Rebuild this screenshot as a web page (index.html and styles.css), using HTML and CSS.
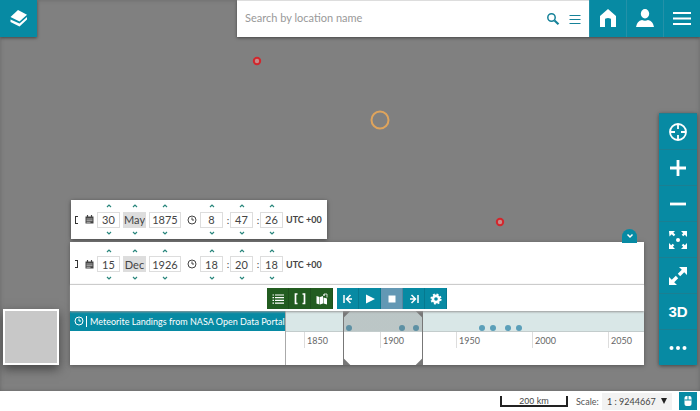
FILE: index.html
```html
<!DOCTYPE html>
<html lang="en">
<head>
<meta charset="utf-8">
<title>Map timeline</title>
<link rel="stylesheet" href="styles.css">
</head>
<body>
<main class="map">
  <svg class="pin pin-a" viewBox="0 0 10 10" aria-hidden="true"><circle cx="5" cy="5" r="3.2" fill="#c98a8a" stroke="#d2262c" stroke-width="2"/></svg>
  <svg class="pin pin-b" viewBox="0 0 10 10" aria-hidden="true"><circle cx="5" cy="5" r="3.2" fill="#c98a8a" stroke="#d2262c" stroke-width="2"/></svg>
  <svg class="pin pin-large" viewBox="0 0 20 20" aria-hidden="true"><circle cx="10" cy="10" r="8.5" fill="none" stroke="#dfa45c" stroke-width="2"/></svg>

  <header class="topbar">
    <button class="tile" aria-label="Layers"><svg width="20" height="20" viewBox="0 0 20 20" fill="#fff"><path d="M9 1l9 4.700-7.500 6.800L1.500 8z"/><path d="M1.500 10.500l9 4L18 8v2.500L10.500 17.500 1.500 13z"/></svg></button>
    <div class="top-right">
      <form class="search">
        <input type="text" placeholder="Search by location name" aria-label="Search by location name">
        <button type="button" aria-label="Search"><svg width="14" height="14" viewBox="0 0 14 14" fill="none" stroke="#168299"><circle cx="5.500" cy="5.500" r="3.700" stroke-width="1.500"/><path d="M8.500 8.500l4 3.700" stroke-width="2.200"/></svg></button>
        <button type="button" aria-label="Search options"><svg width="12" height="12" viewBox="0 0 12 12" stroke="#168299" stroke-width="1.200"><path d="M.5 2.500h11M.5 6.500h11M.5 10.500h11"/></svg></button>
      </form>
      <button class="tile" aria-label="Home"><svg width="20" height="20" viewBox="0 0 20 20" fill="#fff"><path d="M10 0l8 7v11h-5v-7.500q0-1.500-3-1.500t-3 1.500V18H2V7z"/></svg></button>
      <button class="tile" aria-label="Account"><svg width="20" height="20" viewBox="0 0 20 20" fill="#fff"><ellipse cx="10" cy="4.700" rx="4.200" ry="4.700"/><path d="M1 18q1-6 6-7 3 1.500 6 0 5 1 6 7z"/></svg></button>
      <button class="tile" aria-label="Menu"><svg width="20" height="20" viewBox="0 0 20 20" stroke="#fff" stroke-width="1.800"><path d="M1 4h18M1 9.500h18M1 15h18"/></svg></button>
    </div>
  </header>

  <div class="workspace">
    <button class="minimap" aria-label="Background selector"></button>

    <section class="timeline">
      <form class="range range-start">
        <span class="bracket open"></span>
        <svg class="cal" viewBox="0 0 9 9"><path d="M.5 1.500h8v7h-8z" fill="#444"/><path d="M1.500 4h6M1.500 5.700h6M1.500 7.300h4" stroke="#ddd" stroke-width=".7"/><path d="M2.500 0v2.500M6.500 0v2.500" stroke="#444" stroke-width="1.200"/></svg>
        <div class="field"><button type="button" aria-label="Next day"><svg viewBox="0 0 6 4"><path d="M1 3l2-2 2 2"/></svg></button><input value="30" aria-label="Start day"><button type="button" aria-label="Previous day"><svg viewBox="0 0 6 4"><path d="M1 1l2 2 2-2"/></svg></button></div>
        <div class="field month"><button type="button" aria-label="Next month"><svg viewBox="0 0 6 4"><path d="M1 3l2-2 2 2"/></svg></button><input value="May" aria-label="Start month"><button type="button" aria-label="Previous month"><svg viewBox="0 0 6 4"><path d="M1 1l2 2 2-2"/></svg></button></div>
        <div class="field year"><button type="button" aria-label="Next year"><svg viewBox="0 0 6 4"><path d="M1 3l2-2 2 2"/></svg></button><input value="1875" aria-label="Start year"><button type="button" aria-label="Previous year"><svg viewBox="0 0 6 4"><path d="M1 1l2 2 2-2"/></svg></button></div>
        <svg class="clock" viewBox="0 0 10 10"><circle cx="5" cy="5" r="4"/><path d="M5 2.500V5h2"/></svg>
        <div class="field"><button type="button" aria-label="Next hour"><svg viewBox="0 0 6 4"><path d="M1 3l2-2 2 2"/></svg></button><input value="8" aria-label="Start hour"><button type="button" aria-label="Previous hour"><svg viewBox="0 0 6 4"><path d="M1 1l2 2 2-2"/></svg></button></div>
        <span class="colon">:</span>
        <div class="field"><button type="button" aria-label="Next minute"><svg viewBox="0 0 6 4"><path d="M1 3l2-2 2 2"/></svg></button><input value="47" aria-label="Start minute"><button type="button" aria-label="Previous minute"><svg viewBox="0 0 6 4"><path d="M1 1l2 2 2-2"/></svg></button></div>
        <span class="colon">:</span>
        <div class="field"><button type="button" aria-label="Next second"><svg viewBox="0 0 6 4"><path d="M1 3l2-2 2 2"/></svg></button><input value="26" aria-label="Start second"><button type="button" aria-label="Previous second"><svg viewBox="0 0 6 4"><path d="M1 1l2 2 2-2"/></svg></button></div>
        <span class="utc">UTC +00</span>
      </form>

      <div class="panel">
        <button class="collapse" aria-label="Collapse timeline"><svg width="8" height="6" viewBox="0 0 8 6" fill="none" stroke="#fff" stroke-width="1.500"><path d="M1.500 1.500L4 4l2.500-2.500"/></svg></button>
        <form class="range range-end">
          <span class="bracket close"></span>
          <svg class="cal" viewBox="0 0 9 9"><path d="M.5 1.500h8v7h-8z" fill="#444"/><path d="M1.500 4h6M1.500 5.700h6M1.500 7.300h4" stroke="#ddd" stroke-width=".7"/><path d="M2.500 0v2.500M6.500 0v2.500" stroke="#444" stroke-width="1.200"/></svg>
          <div class="field"><button type="button" aria-label="Next day"><svg viewBox="0 0 6 4"><path d="M1 3l2-2 2 2"/></svg></button><input value="15" aria-label="End day"><button type="button" aria-label="Previous day"><svg viewBox="0 0 6 4"><path d="M1 1l2 2 2-2"/></svg></button></div>
          <div class="field month"><button type="button" aria-label="Next month"><svg viewBox="0 0 6 4"><path d="M1 3l2-2 2 2"/></svg></button><input value="Dec" aria-label="End month"><button type="button" aria-label="Previous month"><svg viewBox="0 0 6 4"><path d="M1 1l2 2 2-2"/></svg></button></div>
          <div class="field year"><button type="button" aria-label="Next year"><svg viewBox="0 0 6 4"><path d="M1 3l2-2 2 2"/></svg></button><input value="1926" aria-label="End year"><button type="button" aria-label="Previous year"><svg viewBox="0 0 6 4"><path d="M1 1l2 2 2-2"/></svg></button></div>
          <svg class="clock" viewBox="0 0 10 10"><circle cx="5" cy="5" r="4"/><path d="M5 2.500V5h2"/></svg>
          <div class="field"><button type="button" aria-label="Next hour"><svg viewBox="0 0 6 4"><path d="M1 3l2-2 2 2"/></svg></button><input value="18" aria-label="End hour"><button type="button" aria-label="Previous hour"><svg viewBox="0 0 6 4"><path d="M1 1l2 2 2-2"/></svg></button></div>
          <span class="colon">:</span>
          <div class="field"><button type="button" aria-label="Next minute"><svg viewBox="0 0 6 4"><path d="M1 3l2-2 2 2"/></svg></button><input value="20" aria-label="End minute"><button type="button" aria-label="Previous minute"><svg viewBox="0 0 6 4"><path d="M1 1l2 2 2-2"/></svg></button></div>
          <span class="colon">:</span>
          <div class="field"><button type="button" aria-label="Next second"><svg viewBox="0 0 6 4"><path d="M1 3l2-2 2 2"/></svg></button><input value="18" aria-label="End second"><button type="button" aria-label="Previous second"><svg viewBox="0 0 6 4"><path d="M1 1l2 2 2-2"/></svg></button></div>
          <span class="utc">UTC +00</span>
        </form>

        <div class="playback">
          <div class="group green">
            <button aria-label="Show layers"><svg viewBox="0 0 14 14" stroke="#fff" stroke-width="1.200"><path d="M4 3h9M4 5.700h9M4 8.400h9M4 11.100h9M1.500 3H3M1.500 5.700H3M1.500 8.400H3M1.500 11.100H3"/></svg></button>
            <button aria-label="Time range"><svg viewBox="0 0 14 14" fill="none" stroke="#fff" stroke-width="1.700"><path d="M4.500 2h-2v9.500h2M9.500 2h2v9.500h-2"/></svg></button>
            <button aria-label="Sync map with timeline"><svg viewBox="0 0 14 14" fill="#fff"><path d="M1.500 4l3 1v7.500l-3-1zM5 5l3-1v7.500l-3 1zM8.500 5.500l3.500 1v6l-3.500-1z"/><path d="M9 4V2h3v3.500M8 3h2" fill="none" stroke="#fff" stroke-width=".8"/></svg></button>
          </div>
          <div class="group">
            <button aria-label="Step back"><svg viewBox="0 0 14 14" fill="none" stroke="#fff" stroke-width="1.500"><path d="M3 3v8M9.500 3L5.500 7l4 4M6 7h5"/></svg></button>
            <button aria-label="Play"><svg viewBox="0 0 14 14" fill="#fff"><path d="M3 2.500L12 7l-9 4.500z"/></svg></button>
            <button class="muted" aria-label="Stop"><svg viewBox="0 0 14 14" fill="#fff"><path d="M3.500 3.500h7v7h-7z"/></svg></button>
            <button aria-label="Step forward"><svg viewBox="0 0 14 14" fill="none" stroke="#fff" stroke-width="1.500"><path d="M11 3v8M4.500 3l4 4-4 4M3 7h5"/></svg></button>
            <button aria-label="Settings"><svg viewBox="0 0 14 14" fill="none" stroke="#fff"><circle cx="7" cy="7" r="3.100" stroke-width="2.600"/><circle cx="7" cy="7" r="4.700" stroke-width="1.800" stroke-dasharray="1.900 1.790"/></svg></button>
          </div>
        </div>

        <div class="chart">
          <div class="layers">
            <div class="layer"><svg viewBox="0 0 10 10"><circle cx="5" cy="5" r="4"/><path d="M5 2.500V5h2"/></svg><span>Meteorite Landings from NASA Open Data Portal</span></div>
          </div>
          <div class="track">
            <div class="band">
              <i class="dot" style="left:63px"></i><i class="dot" style="left:116px"></i><i class="dot" style="left:130px"></i><i class="dot" style="left:196px"></i><i class="dot" style="left:207px"></i><i class="dot" style="left:222px"></i><i class="dot" style="left:233px"></i>
            </div>
            <div class="axis"><span>1850</span><span>1900</span><span>1950</span><span>2000</span><span>2050</span></div>
            <div class="selection"></div>
          </div>
        </div>
      </div>
    </section>

    <nav class="tools" aria-label="Map tools">
      <button aria-label="Locate"><svg viewBox="0 0 20 20" fill="none" stroke="#fff" stroke-width="1.800"><circle cx="10" cy="10" r="8"/><path d="M10 2v5M10 13v5M2 10h5M13 10h5"/></svg></button>
      <button aria-label="Zoom in"><svg viewBox="0 0 20 20" stroke="#fff" stroke-width="2.800"><path d="M2 10h16M10 2v16"/></svg></button>
      <button aria-label="Zoom out"><svg viewBox="0 0 20 20" stroke="#fff" stroke-width="2.800"><path d="M2 10h16"/></svg></button>
      <button aria-label="Zoom to full extent"><svg viewBox="0 0 20 20" fill="#fff"><path d="M1 1h6L5.300 2.700l2 2-1.600 1.600-2-2L1.500 6.500zM19 1v6l-2.200-2.200-1.500 1.500-1.600-1.600 1.500-1.500L13 1zM1 19v-6l2.200 2.200 1.500-1.500 1.600 1.600-1.500 1.500L7 19zM19 19h-6l2.200-2.200-1.500-1.500 1.600-1.600 1.500 1.500L19 13z"/><circle cx="10" cy="10" r="2"/></svg></button>
      <button aria-label="Full screen"><svg viewBox="0 0 20 20" fill="#fff"><path d="M11 1h8v8l-2.800-2.800-4 4-2.400-2.400 4-4zM9 19H1v-8l2.800 2.800 4-4 2.400 2.400-4 4z"/></svg></button>
      <button>3D</button>
      <button aria-label="More tools"><svg viewBox="0 0 20 20" fill="#fff"><circle cx="3.500" cy="10" r="2"/><circle cx="10" cy="10" r="2"/><circle cx="16.500" cy="10" r="2"/></svg></button>
    </nav>
  </div>
</main>

<footer class="footer">
  <div class="scalebar">200 km</div>
  <label for="scale">Scale:</label>
  <div class="select"><select id="scale"><option>1 : 9244667</option></select><svg viewBox="0 0 6 6"><path d="M0 0h6L3 6z" fill="#222"/></svg></div>
  <button class="mouse" aria-label="Mouse position"><svg width="12" height="12" viewBox="0 0 12 12"><rect x="2.500" y="1" width="7" height="10" rx="2" fill="#fff"/><path d="M2.500 5h7M6 1v4" stroke="#078aa3"/></svg></button>
</footer>
</body>
</html>
```
FILE: styles.css
```css
* { box-sizing: border-box; }
:root { --teal: #078aa3; --line: #ddd; }
body {
  margin: 0;
  min-height: 100vh;
  display: flex;
  flex-direction: column;
  font-family: Lato, "Open Sans", sans-serif;
  font-size: 10px;
  color: #444;
  background: #fff;
}
button, input, select { font: inherit; color: inherit; margin: 0; padding: 0; border: 0; border-radius: 0; background: none; }
button { display: flex; align-items: center; justify-content: center; }
svg { display: block; }

.map {
  position: relative;
  flex: 1;
  display: flex;
  flex-direction: column;
  justify-content: space-between;
  background: #808080;
  box-shadow: inset 0 0 4px #666;
}
.pin { position: absolute; width: 10px; height: 10px; }
.pin-a { left: 252px; top: 56px; }
.pin-b { left: 495px; top: 217px; }
.pin-large { left: 370px; top: 110px; width: 20px; height: 20px; }

.topbar { display: flex; justify-content: space-between; height: 37px; }
.tile { width: 37px; height: 37px; background: var(--teal); box-shadow: 0 1px 3px #444; }
.top-right { display: flex; width: 463px; box-shadow: 0 1px 3px #444; }
.top-right .tile { box-shadow: none; border-left: 1px solid #2491a8; }
.search { flex: 1; display: flex; align-items: center; gap: 9px; padding: 0 8px; background: #fff; border-top: 1px solid #ddd; }
.search input { flex: 1; min-width: 0; height: 30px; padding-bottom: 3px; font-size: 11px; outline: 0; }
.search input::placeholder { color: #999; opacity: 1; }

.workspace { display: flex; align-items: flex-end; padding: 0 3px 26px; }
.minimap { width: 56px; height: 56px; margin-right: 11px; background: #c8c8c8; border: 2px solid #fff; box-shadow: 0 4px 10px #444; }
.timeline { flex: 1; min-width: 0; }
.panel { position: relative; background: #fff; box-shadow: 0 1px 4px #555; }
.range { display: flex; align-items: center; height: 42px; padding-left: 5px; }
.range-start { width: 256px; height: 39px; margin: 0 0 3px 1px; padding-left: 4px; background: #fff; box-shadow: 0 1px 4px #444; }
.range-end { padding-top: 2px; }
.bracket { width: 3px; height: 8px; border: 1px solid #333; margin-right: 7px; }
.open { border-right: 0; }
.close { border-left: 0; }
.cal { width: 9px; height: 9px; margin-right: 3px; }
.clock { width: 10px; height: 10px; margin: 0 3px; fill: none; stroke: #444; }
.field { width: 23px; margin-right: 3px; }
.field input { display: block; width: 100%; height: 16px; border: 1px solid var(--line); text-align: center; font-size: 11px; }
.field button { width: 100%; height: 11px; }
.field button svg { width: 6px; height: 4px; fill: none; stroke: #28867c; stroke-width: 1.2; }
.field.month input { background: #ddd; }
.field.year { width: 32px; }
.colon { width: 4px; text-align: center; }
.utc { font-size: 9px; font-weight: 700; white-space: nowrap; }
.collapse { position: absolute; right: 7px; top: -13px; width: 15px; height: 14px; border-radius: 8px 8px 0 0; background: var(--teal); }

.playback { display: flex; justify-content: center; gap: 4px; padding: 3px 0 2px; border-top: 1px solid #ccc; box-shadow: 0 1px 2px #999; position: relative; z-index: 1; }
.group { display: flex; background: var(--teal); }
.green { background: #225c20; }
.group button { width: 22px; height: 21px; border-right: 1px solid rgb(0 0 0 / 12%); }
.group svg { width: 14px; height: 14px; }
.group .muted { background: #6398b4; }

.chart { display: flex; height: 54px; }
.layers { flex: 0 0 216px; min-width: 0; border-right: 1px solid #aaa; }
.layer { display: flex; align-items: center; height: 20px; padding-left: 4px; gap: 2px; background: var(--teal); color: #fff; font-size: 9px; white-space: nowrap; }
.layer svg { flex: none; width: 10px; height: 10px; fill: none; stroke: #fff; }
.layer span { border-left: 1px solid #fff; padding-left: 3px; }
.track { position: relative; flex: 1; min-width: 0; overflow: hidden; }
.band { height: 21px; background: #d9e7e7; border-bottom: 1px solid #c3cccc; }
.dot { position: absolute; top: 14px; width: 6px; height: 6px; margin-left: -3px; border-radius: 50%; background: #5b9fb9; }
.axis { display: flex; padding-left: 18px; color: #666; }
.axis span { flex: 0 0 76px; height: 16px; padding: 3px 0 0 2px; border-left: 1px solid var(--line); font-size: 9px; }
.selection { position: absolute; left: 57px; top: 0; bottom: 0; width: 80px; border: solid #777; border-width: 0 1px; background:
  linear-gradient(45deg, #777 4px, transparent 5px),
  linear-gradient(-45deg, #777 4px, transparent 5px),
  linear-gradient(135deg, #777 4px, transparent 5px),
  linear-gradient(-135deg, #777 4px, transparent 5px),
  linear-gradient(rgb(100 100 100 / 25%) 20px, transparent 20px); }

.tools { width: 38px; margin-left: 15px; background: var(--teal); box-shadow: 0 1px 4px #444; }
.tools button { width: 100%; height: 36px; border-top: 1px solid #1b7f92; color: #fff; font: 700 15px "Liberation Sans", sans-serif; }
.tools svg { width: 20px; height: 20px; }

.footer { display: flex; justify-content: flex-end; align-items: center; height: 20px; padding-right: 3px; }
.scalebar { width: 68px; height: 11px; margin-right: 8px; border: solid #222; border-width: 0 2px 2px; font: 9px/10px "Liberation Sans", sans-serif; text-align: center; }
.footer label { width: 26px; font-size: 9px; color: #555; }
.select { display: flex; align-items: center; width: 70px; height: 17px; padding: 0 5px; margin-right: 7px; background: #f2f2f2; }
.select select { appearance: none; flex: 1; min-width: 0; font-size: 9px; }
.select svg { width: 6px; height: 6px; pointer-events: none; }
.mouse { width: 18px; height: 18px; background: var(--teal); }
```
